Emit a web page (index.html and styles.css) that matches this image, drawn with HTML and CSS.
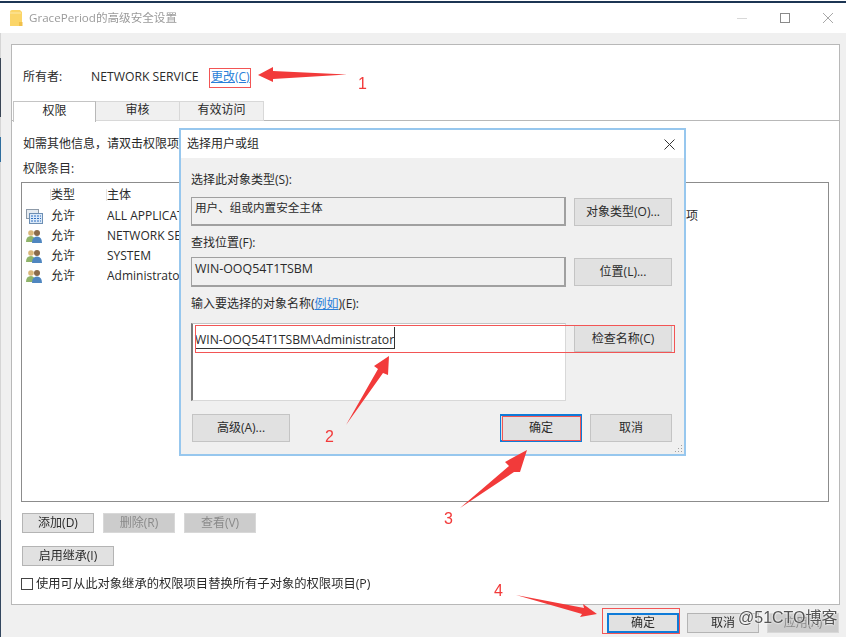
FILE: index.html
```html
<!DOCTYPE html>
<html lang="zh-CN">
<head>
<meta charset="utf-8">
<title>GracePeriod的高级安全设置</title>
<link rel="stylesheet" href="styles.css">
</head>
<body>
<div class="desktop">
  <div class="edge"></div>
  <div class="window">
    <header class="titlebar">
      <svg class="folder" width="13" height="17" viewBox="0 0 13 17"><path d="M0 2 Q0 0 2 0 H10 L12 2 V16 H0Z" fill="#fbd568"/><path d="M9 16 V12 H12.5 V16Z" fill="#f1c04a"/><path d="M0 3 H11" stroke="#fde9a8"/></svg>
      <span class="title">GracePeriod的高级安全设置</span>
      <div class="controls">
        <svg width="10" height="10" viewBox="0 0 10 10"><path d="M0 5.5H10" stroke="#d8d8d8"/></svg>
        <svg width="10" height="10" viewBox="0 0 10 10"><rect x=".5" y=".5" width="9" height="9" fill="none" stroke="#8a8a8a"/></svg>
        <svg width="10" height="10" viewBox="0 0 10 10"><path d="M0 0L10 10M10 0L0 10" stroke="#a8a8a8"/></svg>
      </div>
    </header>
    <main class="content">
      <section class="panel">
        <div class="owner">
          <span class="owner-label">所有者:</span>
          <span class="owner-name">NETWORK SERVICE</span>
          <a class="change">更改(C)</a>
        </div>
        <div class="tabs">
          <span class="tab tab-active">权限</span>
          <span class="tab">审核</span>
          <span class="tab">有效访问</span>
        </div>
        <div class="pane">
          <p class="hint">如需其他信息，请双击权限项目。若要修改权限项目，请选择该项目并单击“编辑”(如果可用)。</p>
          <p class="entries">权限条目:</p>
          <div class="list">
            <div class="row head"><span class="c-icon"></span><span class="c-type">类型</span><span class="c-who">主体</span></div>
            <div class="row"><span class="c-icon"><svg width="17" height="15" viewBox="0 0 17 15"><rect x=".5" y=".5" width="12" height="9" fill="#e6ebf0" stroke="#8d9aa8"/><rect x="3.5" y="4.5" width="13" height="10" fill="#dbe9f8" stroke="#6d8fb4"/><path d="M5 7H15M5 9.5H15M5 12H15" stroke="#2f6fc0" stroke-dasharray="2 1"/></svg></span><span class="c-type">允许</span><span class="c-who">ALL APPLICATION PACKAGES</span><span class="c-apply">项</span></div>
            <div class="row"><span class="c-icon"><svg width="16" height="14" viewBox="0 0 16 14"><use href="#group"/></svg></span><span class="c-type">允许</span><span class="c-who">NETWORK SERVICE</span></div>
            <div class="row"><span class="c-icon"><svg width="16" height="14" viewBox="0 0 16 14"><use href="#group"/></svg></span><span class="c-type">允许</span><span class="c-who">SYSTEM</span></div>
            <div class="row"><span class="c-icon"><svg width="16" height="14" viewBox="0 0 16 14"><use href="#group"/></svg></span><span class="c-type">允许</span><span class="c-who">Administrators</span></div>
          </div>
          <div class="actions">
            <span class="btn btn-72">添加(D)</span>
            <span class="btn btn-72 off">删除(R)</span>
            <span class="btn btn-72 off">查看(V)</span>
          </div>
          <span class="btn btn-inherit">启用继承(I)</span>
          <label class="replace"><span class="check"></span>使用可从此对象继承的权限项目替换所有子对象的权限项目(P)</label>
        </div>
      </section>
      <footer class="footer">
        <span class="btn btn-72 primary">确定</span>
        <span class="btn btn-72">取消</span>
        <span class="btn btn-72 off">应用(A)</span>
      </footer>
    </main>
  </div>

  <section class="dialog">
    <header class="d-title"><span>选择用户或组</span>
      <svg width="11" height="11" viewBox="0 0 11 11"><path d="M.5 .5L10.5 10.5M10.5 .5L.5 10.5" stroke="#333"/></svg>
    </header>
    <div class="d-body">
      <p class="d-label first">选择此对象类型(S):</p>
      <div class="d-row r1">
        <div class="field cjk">用户、组或内置安全主体</div>
        <span class="btn d-btn">对象类型(O)...</span>
      </div>
      <p class="d-label second">查找位置(F):</p>
      <div class="d-row r2">
        <div class="field latin">WIN-OOQ54T1TSBM</div>
        <span class="btn d-btn">位置(L)...</span>
      </div>
      <p class="d-label third">输入要选择的对象名称(<a class="sample">例如</a>)(E):</p>
      <div class="d-row top">
        <div class="names"><span class="typed">WIN-OOQ54T1TSBM\Administrator</span></div>
        <span class="btn d-btn check-name">检查名称(C)</span>
      </div>
      <div class="d-foot">
        <span class="btn d-btn">高级(A)...</span>
        <span class="d-right">
          <span class="btn d-btn d-narrow ok">确定</span>
          <span class="btn d-btn d-narrow">取消</span>
        </span>
      </div>
    </div>
    <svg class="grip" width="9" height="9" viewBox="0 0 9 9"><path d="M7 1h1v1H7zM4 4h1v1H4zM7 4h1v1H7zM1 7h1v1H1zM4 7h1v1H4zM7 7h1v1H7z" fill="#a0a0a0"/></svg>
  </section>

  <svg class="marks" width="846" height="637" viewBox="0 0 846 637">
    <defs>
      <g id="group">
        <circle cx="5" cy="4" r="2.8" fill="#d9b77a"/><path d="M0 13 Q0 7 5 7 Q9 7 9 13Z" fill="#8fb36a"/>
        <circle cx="11" cy="4" r="3" fill="#8a6a4a"/><path d="M6 14 Q6 7.500 11 7.500 Q16 7.500 16 14Z" fill="#4f86c0"/>
      </g>
    </defs>
    <g fill="#f23a3a">
      <polygon points="258,75 273,67 273,71 347,74.500 273,79 273,82"/>
      <polygon points="389,356 374,366 378,369 346,425 383,373 388,375"/>
      <polygon points="527,450 505,462 509,466 460,508 514,472 520,472"/>
      <polygon points="597,614 583,604 584,608 516,595 582,614 580,617"/>
    </g>
    <g fill="none" stroke="#f25555">
      <rect x="209.500" y="68.500" width="41" height="19"/>
      <rect x="195.500" y="325.500" width="479" height="27"/>
      <rect x="502.500" y="416.500" width="78" height="24"/>
      <rect x="602.500" y="608.500" width="77" height="25"/>
    </g>
  </svg>
  <span class="num n1">1</span>
  <span class="num n2">2</span>
  <span class="num n3">3</span>
  <span class="num n4">4</span>
  <span class="watermark">@51CTO博客</span>
</div>
</body>
</html>
```

FILE: styles.css
```css
* { box-sizing: border-box; }
html, body { margin: 0; padding: 0; }
body {
  width: 846px;
  height: 637px;
  overflow: hidden;
  background: #f0f0f0;
  font: 12px/16px "Open Sans", "Noto Sans CJK SC", sans-serif;
  color: #2a2a2a;
}
p { margin: 0; }

.desktop { position: relative; width: 846px; height: 637px; display: flex; overflow: hidden; filter: blur(0.35px); }
.edge {
  width: 1px;
  flex: none;
  background: linear-gradient(#d5d5d5 0 58px, #3a4656 58px 117px, #d5d5d5 117px 137px, #2f6e9e 137px 162px, #d5d5d5 162px 520px, #33475f 520px);
}
.window { flex: 1; display: flex; flex-direction: column; min-width: 0; }

.titlebar {
  height: 32px;
  flex: none;
  margin-left: -1px;
  border-top: 2px solid #1c3553;
  margin-top: 1px;
  background: #fff;
  display: flex;
  align-items: center;
  padding: 0 13px 0 10px;
  box-shadow: 0 -1px 0 #fff;
}
.folder { margin-right: 6px; }
.title { color: #9a9a9a; font-size: 11.6px; }
.controls { margin-left: auto; display: flex; gap: 33px; margin-top: -1px; }

.content { flex: 1; display: flex; flex-direction: column; padding: 11px 6px 0 10px; min-height: 0; }
.panel { height: 561px; background: #fff; border: 1px solid #b8b8b8; display: flex; flex-direction: column; flex: none; }
.owner { height: 56px; flex: none; display: flex; align-items: center; padding: 7px 0 0 11px; }
.owner-label { width: 68px; }
.owner-name { width: 120px; font-size: 12.2px; }
.change { color: #2a7fd8; text-decoration: underline; }
.tabs { display: flex; height: 20px; flex: none; padding-left: 1px; border-bottom: 1px solid #b8b8b8; }
.tab { width: 84px; height: 20px; padding-bottom: 2px; background: #f0f0f0; border: 1px solid #d8d8d8; border-left: 0; display: flex; align-items: center; justify-content: center; }
.tab-active { width: 83px; height: 21px; padding-bottom: 3px; background: #fff; border: 1px solid #c4c4c4; border-bottom: 0; border-right-color: #b8b8b8; position: relative; z-index: 1; }
.pane { flex: 1; padding: 15px 10px 0 9px; display: flex; flex-direction: column; align-items: flex-start; }
.hint { white-space: nowrap; margin-left: 2px; width: 157px; overflow: hidden; }
.entries { margin: 9px 0 0 2px; }
.list { width: 808px; height: 320px; margin-top: 5px; border: 1px solid #8c8c8c; background: #fff; flex: none; padding-top: 1px; }
.row { display: flex; align-items: center; height: 20px; white-space: nowrap; }
.row.head { height: 22px; }
.c-icon { width: 29px; padding-left: 4px; display: flex; flex: none; }
.c-type { width: 56px; flex: none; }
.c-who { width: 72px; flex: none; overflow: hidden; }
.c-apply { margin-left: 507px; }
.head .c-type, .head .c-who { box-shadow: -6px 0 0 -5px #e4e4e4; height: 22px; line-height: 22px; }

.btn {
  display: inline-flex;
  align-items: center;
  justify-content: center;
  background: #e1e1e1;
  border: 1px solid #b4b4b4;
  white-space: nowrap;
  flex: none;
}
.btn-72 { width: 72px; height: 20px; }
.off { background: #cccccc; border-color: #d8d8d8; color: #8a8a8a; }
.actions { display: flex; gap: 9px; margin: 11px 0 0 1px; }
.btn-inherit { width: 92px; height: 20px; margin: 13px 0 0 1px; }
.replace { display: flex; align-items: center; margin-top: 10px; white-space: nowrap; font-size: 12.3px; }
.check { width: 12px; height: 12px; border: 1px solid #444; background: #fff; margin-right: 3px; }

.footer { display: flex; justify-content: flex-end; gap: 8px; padding: 8px 1px 0 0; }
.primary { border: 2px solid #0f7bd8; }

.dialog {
  position: absolute;
  left: 179px;
  top: 128px;
  width: 507px;
  height: 328px;
  background: #f0f0f0;
  border: 2px solid #97c7ee;
  display: flex;
  flex-direction: column;
}
.d-title { height: 28px; flex: none; background: #fff; display: flex; align-items: center; justify-content: space-between; padding: 0 9px 0 6px; }
.d-body { flex: 1; padding: 0 12px 0 10px; display: flex; flex-direction: column; }
.d-label.first { margin-top: 14px; }
.d-label.second { margin-top: 9px; }
.d-label.third { margin-top: 9px; }
.sample { color: #2a7fd8; text-decoration: underline; }
.d-row { display: flex; gap: 8px; align-items: flex-start; }
.d-row.r1 { margin-top: 9px; }
.d-row.r2 { margin-top: 6px; }
.d-row.r1 .field { height: 29px; }
.d-row.top { margin-top: 11px; }
.field { width: 375px; height: 30px; border: 1px solid #a0a0a0; border-width: 1px 2px 2px 1px; padding: 2px 3px; background: #f0f0f0; }
.cjk { font-size: 11.6px; }
.latin { font-size: 12.4px; padding-top: 3px; }
.d-btn { width: 98px; height: 28px; background: #e1e1e1; border: 1px solid #c4c4c4; }
.d-row .d-btn { margin-top: 1px; }
.names { width: 375px; height: 78px; background: #fff; border: 1px solid #d8d8d8; border-left: 2px solid #777; border-top-color: #c4c4c4; padding: 3px 0 0 2px; }
.typed { border-bottom: 1px solid #333; border-right: 1px solid #333; display: inline-block; line-height: 17px; height: 22px; padding-top: 4px; font-size: 12.2px; }
.d-row .check-name { margin-top: 2px; height: 27px; }
.d-foot { display: flex; justify-content: space-between; margin: 13px 0 0 1px; }
.d-right { display: flex; gap: 8px; }
.d-narrow { width: 82px; }
.ok { border: 2px solid #0f7bd8; border-left-width: 1px; border-right-width: 1px; }
.grip { position: absolute; right: 1px; bottom: 1px; }

.marks { position: absolute; left: 0; top: 0; pointer-events: none; }
.num { position: absolute; color: #f23a3a; font: 16px/18px "Liberation Sans", sans-serif; }
.n1 { left: 358px; top: 75px; }
.n2 { left: 325px; top: 428px; }
.n3 { left: 444px; top: 510px; }
.n4 { left: 494px; top: 582px; }
.watermark {
  position: absolute;
  left: 738px;
  top: 608px;
  font: 16px/20px "Liberation Sans", "Noto Sans CJK SC", sans-serif;
  color: #555;
  text-shadow: 0 0 2px #fff, 0 0 2px #fff;
}
```
